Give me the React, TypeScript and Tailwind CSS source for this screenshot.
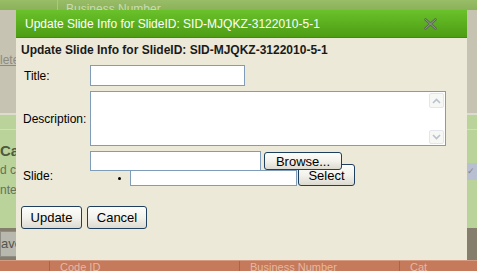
import React from "react";

const sans = { fontFamily: '"Liberation Sans", Arial, sans-serif' };

function XpButton({ label, className }: { label: string; className: string }) {
  return (
    <button
      className={`flex items-center justify-center rounded-[3px] border border-[#1f3f5f] bg-gradient-to-b from-[#fdfdfb] via-[#f3f2ec] to-[#dcdad0] text-[13px] leading-none text-black ${className}`}
      style={sans}
    >
      {label}
    </button>
  );
}

function Chevron({ up }: { up?: boolean }) {
  return (
    <svg width="9" height="6" viewBox="0 0 9 6">
      <path
        d={up ? "M1 5 L4.5 1.5 L8 5" : "M1 1 L4.5 4.5 L8 1"}
        fill="none"
        stroke="#b9c3cf"
        strokeWidth="1.6"
      />
    </svg>
  );
}

function PageBehind() {
  return (
    <div className="flex h-[271px] w-[477px] flex-col text-[12px]" style={sans}>
      <div className="flex h-[10px] bg-gradient-to-b from-[#98bd66] to-[#8bb15a]">
        <div className="w-[58px] border-r border-[#a9c882]" />
        <div className="pl-2 text-[#c9dcb0]">Business Number</div>
      </div>
      <div className="flex h-[103px] justify-between bg-[#c6c3b3]">
        <div className="pt-[41px] whitespace-nowrap text-[#8d8b80] underline">lete slide</div>
        <div />
      </div>
      <div className="h-[2px] bg-[#dcdccf]" />
      <div className="flex h-[113px] flex-col bg-[#bad39b]">
        <div className="h-[15px] border-b border-[#cfe0b9]" />
        <div className="mt-[12px] whitespace-nowrap text-[15px] font-bold leading-[18px] text-[#4e5a3e]">Categories</div>
        <div className="whitespace-nowrap leading-[20px] text-[#66705a]">d categories to the slide</div>
        <div className="whitespace-nowrap leading-[20px] text-[#66705a]">nter a category name</div>
        <div className="ml-auto mt-[-37px] flex h-[17px] w-[12px] items-center justify-center bg-[#b7bfd0] text-[9px] text-[#7c8496]">✓</div>
      </div>
      <div className="flex h-[32px] items-center justify-between bg-[#857e6d]">
        <div className="flex h-[26px] w-[40px] items-center border border-[#8e8e86] bg-[#b9b8ae] text-[13px] text-[#55554d]">ave all</div>
      </div>
      <div className="flex h-[11px] border-t border-[#d59a80] bg-[#c47a5b] text-[11px] leading-[12px] text-[#e6b8a2]">
        <div className="w-[50px] border-r border-[#a8654a]" />
        <div className="w-[190px] border-r border-[#a8654a] pl-[10px]">Code ID</div>
        <div className="w-[160px] border-r border-[#a8654a] pl-[10px]">Business Number</div>
        <div className="pl-[10px]">Cat</div>
      </div>
    </div>
  );
}

export default function App() {
  return (
    <div className="relative h-[271px] w-[477px] overflow-hidden">
      <PageBehind />

      <div className="absolute left-[16px] top-[10px] flex h-[250px] w-[451px] flex-col bg-[#ece9d8]">
        <div className="flex h-[28px] items-center justify-between border-b border-[#3f8a10] bg-gradient-to-b from-[#6ac22a] to-[#4d9d13] pl-[9px] pr-[30px]">
          <span className="text-[12px] text-white" style={sans}>
            Update Slide Info for SlideID: SID-MJQKZ-3122010-5-1
          </span>
          <svg width="13" height="12" viewBox="0 0 13 12">
            <path d="M1.5 1.5 L11.5 10.5 M11.5 1.5 L1.5 10.5" stroke="#5c6b58" strokeWidth="2.6" strokeLinecap="round" />
            <path d="M1.5 1.5 L11.5 10.5 M11.5 1.5 L1.5 10.5" stroke="#8e9a88" strokeWidth="1" strokeLinecap="round" />
          </svg>
        </div>

        <div className="flex flex-col pl-[5px] pt-[4px] text-[12px] text-black" style={sans}>
          <div className="text-[12px] font-bold leading-[16px] text-[#1a1a1a]">
            Update Slide Info for SlideID: SID-MJQKZ-3122010-5-1
          </div>

          <div className="mt-[7px] grid grid-cols-[69px_1fr] gap-y-[5px]">
            <div className="flex items-center pl-[3px]">Title:</div>
            <div className="h-[21px] w-[155px] border border-[#7f9db9] bg-white" />

            <div className="flex items-center pl-[2px]">Description:</div>
            <div className="flex h-[55px] w-[356px] justify-end border border-[#7f9db9] bg-white p-[1px]">
              <div className="flex w-[15px] flex-col justify-between">
                <div className="flex h-[15px] items-center justify-center rounded-[2px] border border-[#e3e6ec] bg-[#f7f7f3]">
                  <Chevron up />
                </div>
                <div className="flex h-[14px] items-center justify-center rounded-[2px] border border-[#e3e6ec] bg-[#f7f7f3]">
                  <Chevron />
                </div>
              </div>
            </div>

            <div className="flex items-center pl-[2px] pt-[14px]">Slide:</div>
            <div className="flex flex-col">
              <div className="flex items-start">
                <div className="h-[20px] w-[171px] border border-[#7f9db9] bg-white" />
                <XpButton label="Browse..." className="relative z-10 ml-[3px] mt-[1px] h-[18px] w-[78px]" />
              </div>
              <ul className="mt-[-7px] flex items-center pl-[28px]">
                <li className="mt-[6px] mr-[9px] h-[3px] w-[3px] rounded-full bg-black" />
                <div className="mt-[6px] h-[16px] w-[167px] border border-[#7f9db9] bg-white" />
                <XpButton label="Select" className="ml-[1px] h-[22px] w-[57px]" />
              </ul>
            </div>
          </div>

          <div className="mt-[20px] flex gap-[5px]">
            <XpButton label="Update" className="h-[23px] w-[61px]" />
            <XpButton label="Cancel" className="h-[23px] w-[60px]" />
          </div>
        </div>
      </div>
    </div>
  );
}
